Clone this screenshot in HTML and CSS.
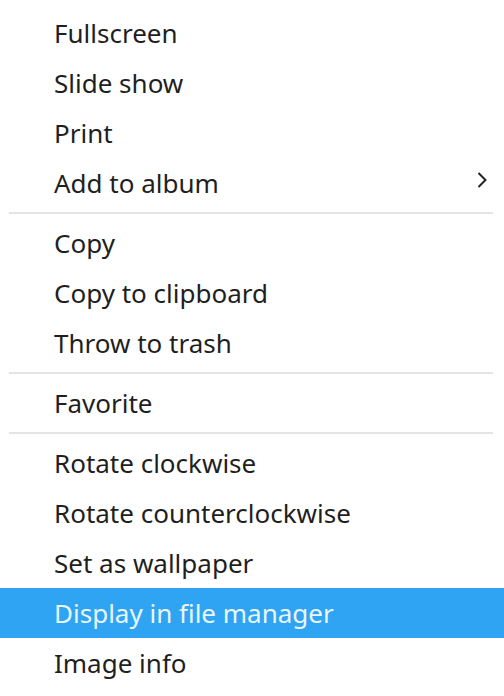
FILE: index.html
```html
<!DOCTYPE html>
<html>
<head>
<meta charset="utf-8">
<link rel="stylesheet" href="styles.css">
</head>
<body>
<div class="menu">
  <div class="item">Fullscreen</div>
  <div class="item">Slide show</div>
  <div class="item">Print</div>
  <div class="item">Add to album
    <svg class="chev" width="12" height="18" viewBox="0 0 12 18"><path d="M2.5 2 L9.5 9 L2.5 16" fill="none" stroke="#232323" stroke-width="2"/></svg>
  </div>
  <div class="sep"></div>
  <div class="item">Copy</div>
  <div class="item">Copy to clipboard</div>
  <div class="item">Throw to trash</div>
  <div class="sep"></div>
  <div class="item">Favorite</div>
  <div class="sep"></div>
  <div class="item">Rotate clockwise</div>
  <div class="item">Rotate counterclockwise</div>
  <div class="item">Set as wallpaper</div>
  <div class="item active">Display in file manager</div>
  <div class="item">Image info</div>
</div>
</body>
</html>
```
FILE: styles.css
```css
html, body {
  margin: 0;
  padding: 0;
  background: #ffffff;
}
.menu {
  width: 504px;
  height: 696px;
  box-sizing: border-box;
  padding: 8px 0;
  font-family: "Noto Sans", "Open Sans", sans-serif;
  font-size: 26px;
  color: #1f1f1f;
}
.item {
  height: 50px;
  display: flex;
  align-items: center;
  justify-content: space-between;
  padding: 0 16px 0 54px;
  box-sizing: border-box;
}
.item.active {
  background: #2fa4f2;
  color: #eaf6ff;
}
.chev {
  margin-top: -6px;
}
.sep {
  height: 10px;
  display: flex;
  align-items: center;
  padding: 0 11px 0 9px;
}
.sep::before {
  content: "";
  flex: 1;
  height: 2px;
  background: #e4e4e4;
}
```
